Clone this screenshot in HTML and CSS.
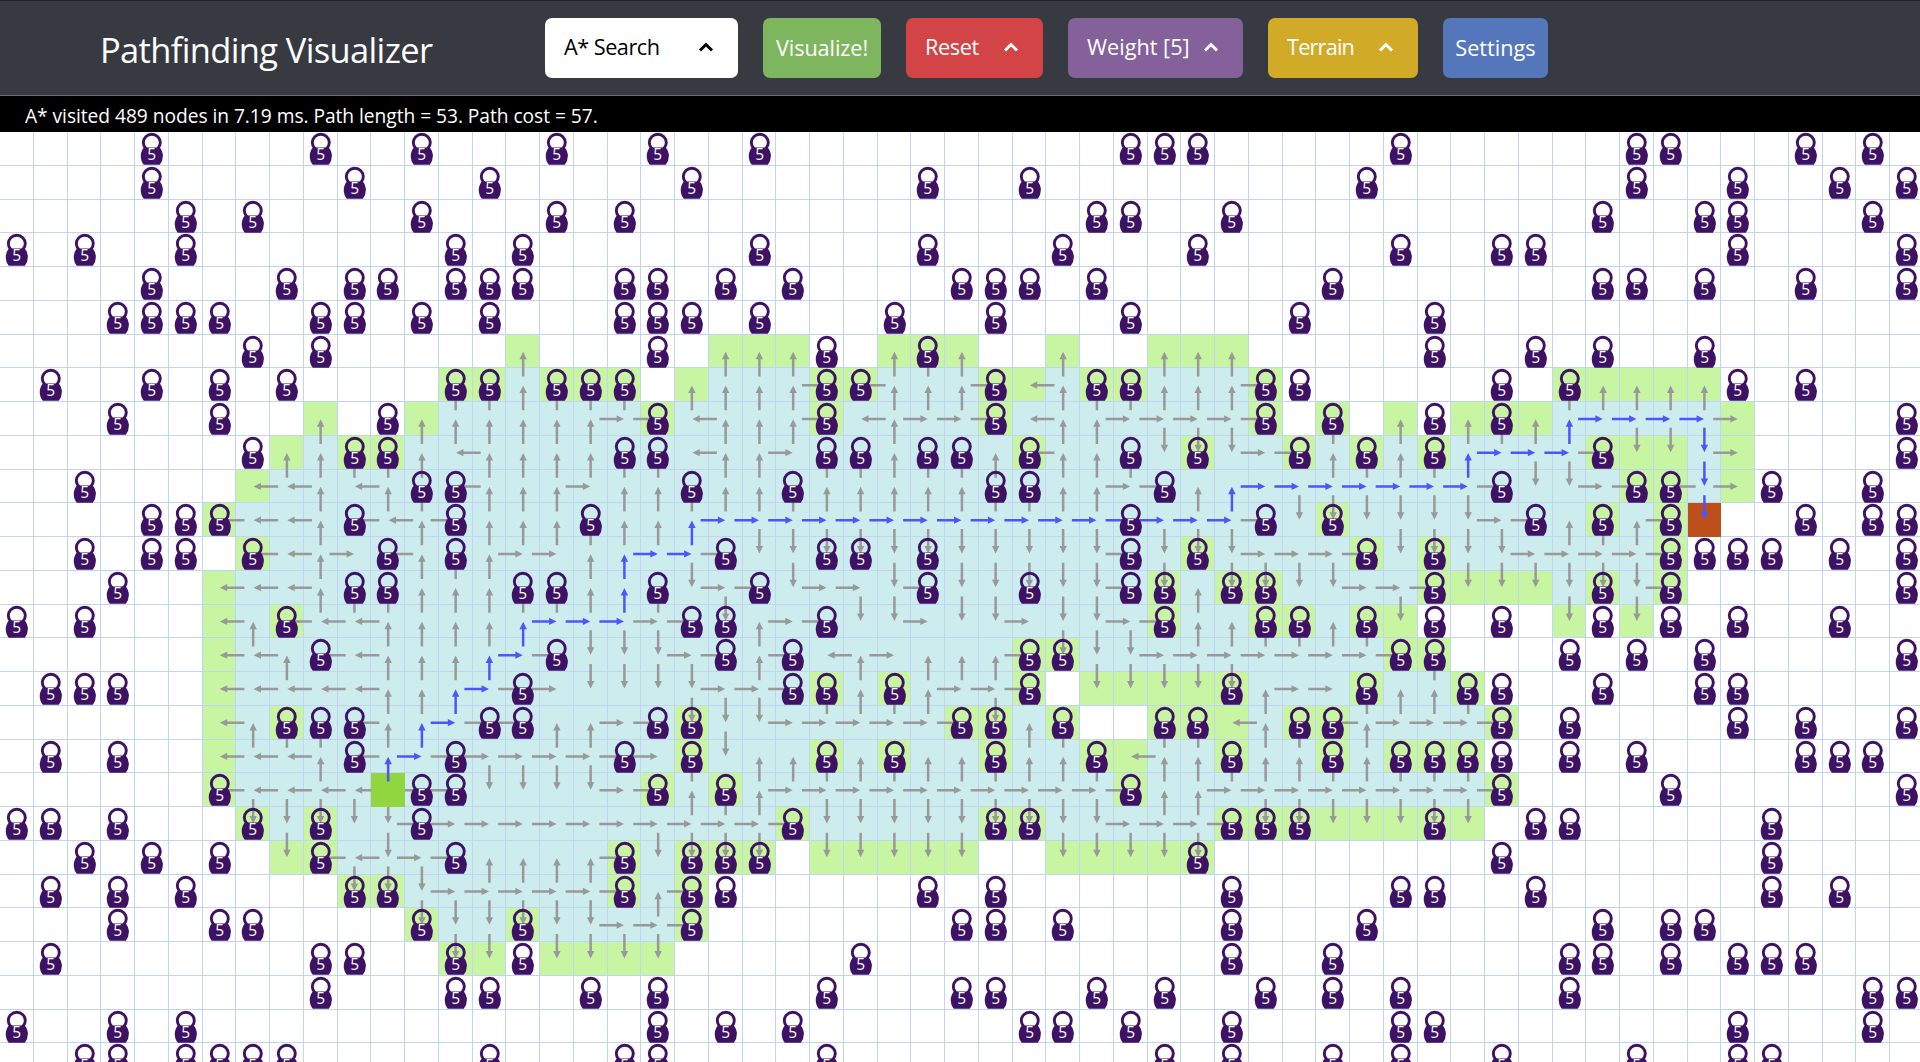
FILE: index.html
```html
<!DOCTYPE html>
<html lang="en">
<head>
<meta charset="utf-8">
<title>Pathfinding Visualizer</title>
<link rel="stylesheet" href="styles.css">
</head>
<body>
<header class="navbar">
  <h1 class="title">Pathfinding Visualizer</h1>
  <nav class="controls">
    <button class="btn btn-algorithm dropdown"><span class="label">A* Search</span><svg class="caret" viewBox="0 0 16 10"><path d="M2 8.5 8 2.5l6 6"/></svg></button>
    <button class="btn btn-visualize"><span class="label">Visualize!</span></button>
    <button class="btn btn-reset dropdown"><span class="label">Reset</span><svg class="caret" viewBox="0 0 16 10"><path d="M2 8.5 8 2.5l6 6"/></svg></button>
    <button class="btn btn-weight dropdown"><span class="label">Weight [5]</span><svg class="caret" viewBox="0 0 16 10"><path d="M2 8.5 8 2.5l6 6"/></svg></button>
    <button class="btn btn-terrain dropdown"><span class="label">Terrain</span><svg class="caret" viewBox="0 0 16 10"><path d="M2 8.5 8 2.5l6 6"/></svg></button>
    <button class="btn btn-settings"><span class="label">Settings</span></button>
  </nav>
</header>
<p class="status"><span class="status-text">A* visited 489 nodes in 7.19 ms. Path length = 53. Path cost = 57.</span></p>
<main class="board" id="board"></main>
<script src="grid.js"></script>
</body>
</html>
```
FILE: styles.css
```css
* {
  box-sizing: border-box;
}

body {
  margin: 0;
  height: 100vh;
  overflow: hidden;
  background: #fff;
  font-family: "Open Sans", "Noto Sans", sans-serif;
}

.navbar {
  display: flex;
  align-items: flex-start;
  height: 96px;
  padding: 17px 0 0 100px;
  background: #373a41;
  border-top: 1px solid #222429;
  border-bottom: 1px solid #686b70;
}

.title {
  width: 445px;
  margin: 8px 0 0;
  color: #fff;
  font-size: 34.5px;
  font-weight: 400;
  line-height: 48px;
  letter-spacing: -0.65px;
  white-space: nowrap;
}

.controls {
  display: flex;
  gap: 25px;
}

.btn {
  display: flex;
  align-items: center;
  justify-content: center;
  height: 60px;
  padding: 0;
  border: 0;
  border-radius: 7px;
  color: #fff;
  font: 21.7px/28px "Open Sans", "Noto Sans", sans-serif;
  white-space: nowrap;
}

.dropdown {
  justify-content: space-between;
  padding: 0 24px 2px 19px;
}

.btn-algorithm { width: 193px; background: #fff; color: #000; letter-spacing: -0.5px; }
.btn-visualize { width: 118px; background: #7eb55f; letter-spacing: -0.1px; }
.btn-reset { width: 137px; background: #d34447; letter-spacing: -0.4px; }
.btn-weight { width: 175px; background: #84619a; }
.btn-terrain { width: 150px; background: #d1ab27; letter-spacing: -0.8px; }
.btn-settings { width: 105px; background: #5477bb; }

.caret {
  width: 16px;
  height: 10px;
  fill: none;
  stroke: currentColor;
  stroke-width: 3;
}

.status {
  height: 36px;
  margin: 0;
  padding: 4px 0 0 25px;
  background: #000;
  color: #fff;
  font-size: 19.2px;
  line-height: 32px;
  letter-spacing: -0.04px;
}

.board {
  position: relative;
  display: grid;
  grid-template-columns: repeat(57, 33.75px);
  grid-auto-rows: 33.75px;
}

.cell {
  border-right: 1px solid #c1d5f3;
  border-bottom: 1px solid #c1d5f3;
}

.visited { background: #cdecee; }
.frontier { background: #c8f5a1; }
.target { background: #bc4f1a; border-color: #bc4f1a; }
.start {
  position: relative;
  z-index: 2;
  background: #91d63e;
  border-color: #91d63e;
}

.weighted {
  position: relative;
  z-index: 4;
}

/* arrows span two cells, so they are drawn in layers over the board */
.arrows {
  position: absolute;
  top: 0;
  left: 0;
  width: 1924px;
  height: 945px;
}
.arrows-explored { z-index: 1; fill: #999; }
.arrows-path { z-index: 3; fill: #4f55fa; }

.weight {
  display: block;
  width: 33px;
  height: 33px;
  overflow: visible;
}
.weight-ring { fill: none; stroke: #3d1163; stroke-width: 2.9; }
.weight-body { fill: #3d1163; }
.weight-value {
  fill: #fff;
  font-size: 15.5px;
  text-anchor: middle;
}
```
FILE: grid.js
```js
// Explored area: [first column, one letter per cell].
// The letter is the direction the cell was entered from its parent:
// upper case = visited, lower case = frontier, ^ > v = final path, S/X = start/target.
const EXPLORED = {
  6: [15, "u.....uuu..uuu..u..uuu"],
  7: [13, "uuUuuu.uUUUrlUUUrlUuuUUUr........uuuuu"],
  8: [9, "u..uUUUUURrLUUUrLURRrLUURRRRr.u.u.uuu^>>>>r"],
  9: [8, "uUuuULUUUUUULUURUUUUUUlUUUDdDRrUuUu^>>>rddvr"],
  10: [7, "lLULUULUUURUUUUUUUUUUUUUUURRU^>>>>>>>RDDRrlvr"],
  11: [6, "lLLULLURUUUUUU^>>>>>>>>>>>>>>>>RDdDDDDRRUuUrX"],
  12: [7, "lLURLUUURRU^>>RDDDDDDDDDDDRDdDRRRrDdDDRRRRr"],
  13: [6, "lLLUUUUUUUUU^UDRRDRRDRDDDDDRdUddDDRRrdddDdDr"],
  14: [6, "lUlLLUUUU^>>>RRDURRDDRDDRDDRrUUuuUud....d.d"],
  15: [6, "lLULLUUU^>RDDDRRURLURUUUrdDDRRRRRRRru"],
  16: [6, "lLLLLUU^>RRDDDDRRRuUuURRr.dddddURRuUUu"],
  17: [6, "lUuULU^>RRUURRdDDRRRRRrdUu..uulUulURRRr"],
  18: [6, "lLLUL^>RRRRRRRuDUUuUuUUuUUulUUuUUuUuuu"],
  19: [6, "lLLLLSRRDDDDRrUuURRRRRRRRRRrUURRRRRRRRr"],
  20: [7, "dDdDDRRRRRRRRRRRrDDDDDddDDRRRrddddddd"],
  21: [8, "dlLDRRUUUUrDddd.ddddd..ddddd"],
  22: [10, "ddDRRRRRrUr"],
  23: [12, "dDDdDDRRr"],
  24: [13, "dd.dddd"],
};

// Columns that hold a weight, row by row.
const WEIGHTS = [
  [4, 9, 12, 16, 19, 22, 33, 34, 35, 41, 48, 49, 53, 55],
  [4, 10, 14, 20, 27, 30, 40, 48, 51, 54, 56],
  [5, 7, 12, 16, 18, 32, 33, 36, 47, 50, 51, 55],
  [0, 2, 5, 13, 15, 22, 27, 31, 35, 41, 44, 45, 51, 56],
  [4, 8, 10, 11, 13, 14, 15, 18, 19, 21, 23, 28, 29, 30, 32, 39, 47, 48, 50, 53, 56],
  [3, 4, 5, 6, 9, 10, 12, 14, 18, 19, 20, 22, 26, 29, 33, 38, 42],
  [7, 9, 19, 24, 27, 42, 45, 47, 50],
  [1, 4, 6, 8, 13, 14, 16, 17, 18, 24, 25, 29, 32, 33, 37, 38, 44, 46, 51, 53],
  [3, 6, 11, 19, 24, 29, 37, 39, 42, 44, 56],
  [7, 10, 11, 18, 19, 24, 25, 27, 28, 30, 33, 35, 38, 40, 42, 47, 56],
  [2, 12, 13, 20, 23, 29, 30, 34, 44, 48, 49, 52, 55],
  [4, 5, 6, 10, 13, 17, 33, 37, 39, 45, 47, 49, 53, 55, 56],
  [2, 4, 5, 7, 11, 13, 21, 24, 25, 27, 33, 35, 40, 42, 49, 50, 51, 52, 54, 56],
  [3, 10, 11, 15, 16, 19, 22, 27, 30, 33, 34, 36, 37, 42, 47, 49, 56],
  [0, 2, 8, 20, 21, 24, 34, 37, 38, 40, 42, 44, 47, 49, 51, 54],
  [9, 16, 21, 23, 30, 31, 41, 42, 46, 48, 50, 56],
  [1, 2, 3, 15, 23, 24, 26, 30, 36, 40, 43, 44, 47, 50, 51],
  [8, 9, 10, 14, 15, 19, 20, 28, 29, 31, 34, 35, 38, 39, 44, 46, 51, 53, 56],
  [1, 3, 10, 13, 18, 20, 24, 26, 29, 32, 36, 39, 41, 42, 43, 44, 46, 48, 53, 54, 55],
  [6, 12, 13, 19, 21, 33, 44, 49, 56],
  [0, 1, 3, 7, 9, 12, 23, 29, 30, 36, 37, 38, 42, 45, 46, 52],
  [2, 4, 6, 9, 13, 18, 20, 21, 22, 35, 44, 52],
  [1, 3, 5, 10, 11, 18, 20, 21, 27, 29, 36, 41, 42, 45, 52, 54],
  [3, 6, 7, 12, 15, 20, 28, 29, 31, 36, 40, 47, 49, 50],
  [1, 9, 10, 13, 15, 25, 36, 39, 46, 47, 49, 51, 52, 53],
  [9, 13, 14, 17, 19, 24, 28, 29, 32, 34, 37, 39, 41, 46, 55, 56],
  [0, 3, 5, 19, 21, 23, 30, 31, 33, 36, 41, 42, 51, 55],
  [2, 3, 5, 6, 7, 8, 14, 18, 19, 24, 34, 36, 39, 41, 44, 48, 51, 52],
];

const COLUMNS = 57;
const SIZE = 33.75;
const ANGLES = { r: 0, ">": 0, d: 90, v: 90, x: 90, l: 180, u: 270, "^": 270 };

const WEIGHT_ICON =
  '<svg class="weight" viewBox="0 0 33 33">' +
  '<ellipse class="weight-ring" cx="16.8" cy="10.6" rx="8.5" ry="8.4"/>' +
  '<path class="weight-body" d="M8.8 15.4H24.8A11 12.5 0 0 1 24.8 32.7H8.8A11 12.5 0 0 1 8.8 15.4Z"/>' +
  '<text class="weight-value" x="16.8" y="27.5">5</text></svg>';

function cellClass(code) {
  if (code === ".") return "";
  if (code === "S") return " start";
  if (code === "X") return " target";
  return /[urdl]/.test(code) ? " frontier" : " visited";
}

// An arrow ends in the middle of its cell and starts in the parent cell.
function arrow(row, column, code) {
  const x = column * SIZE + 16.9;
  const y = row * SIZE + 16.9;
  const angle = ANGLES[code.toLowerCase()];
  return `<path transform="translate(${x} ${y}) rotate(${angle})" d="M-25 -1.25H-7.8V-3.7L-0.4 0L-7.8 3.7V1.25H-25Z"/>`;
}

let cells = "";
let explored = "";
let path = "";

WEIGHTS.forEach((weights, row) => {
  const [first, codes] = EXPLORED[row] || [0, ""];
  for (let column = 0; column < COLUMNS; column++) {
    const code = codes[column - first] || ".";
    const weighted = weights.includes(column);
    cells += `<div class="cell${cellClass(code)}">` +
      (weighted ? `<div class="weighted">${WEIGHT_ICON}</div>` : "") + "</div>";
    if (code === "." || code === "S") continue;
    if ("^>vX".includes(code)) path += arrow(row, column, code);
    else explored += arrow(row, column, code);
  }
});

document.getElementById("board").innerHTML = cells +
  `<svg class="arrows arrows-explored">${explored}</svg>` +
  `<svg class="arrows arrows-path">${path}</svg>`;
```
